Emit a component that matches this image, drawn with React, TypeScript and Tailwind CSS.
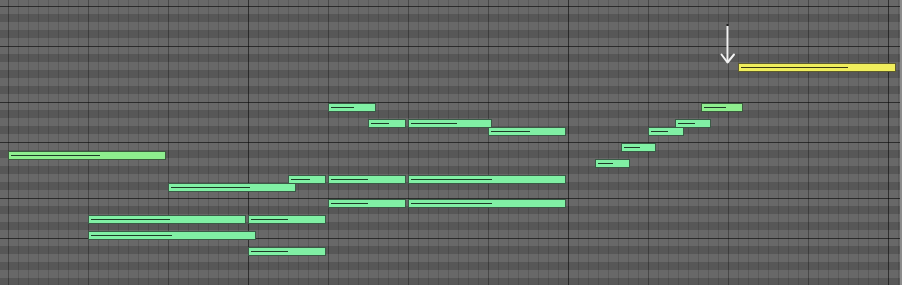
import React from "react";

// piano roll: rows are 8px, first row starts 2px above the page top
const ROWS = 36;
// top row is F, going down in pitch
const KEYS = ["F", "E", "D#", "D", "C#", "C", "B", "A#", "A", "G#", "G", "F#"];
const COLS = 91;

type Note = {
  x: number;
  end: number;
  y: number;
  lineEnd: number;
  tone?: "lime" | "yellow";
};

const notes: Note[] = [
  { x: 8, end: 166, y: 152, lineEnd: 100, tone: "lime" },
  { x: 168, end: 296, y: 184, lineEnd: 250 },
  { x: 88, end: 246, y: 216, lineEnd: 170 },
  { x: 248, end: 326, y: 216, lineEnd: 288 },
  { x: 88, end: 256, y: 232, lineEnd: 172 },
  { x: 248, end: 326, y: 248, lineEnd: 288 },
  { x: 288, end: 326, y: 176, lineEnd: 310 },
  { x: 328, end: 406, y: 176, lineEnd: 368 },
  { x: 408, end: 566, y: 176, lineEnd: 492 },
  { x: 328, end: 406, y: 200, lineEnd: 368 },
  { x: 408, end: 566, y: 200, lineEnd: 492 },
  { x: 328, end: 376, y: 104, lineEnd: 354 },
  { x: 368, end: 406, y: 120, lineEnd: 389 },
  { x: 408, end: 492, y: 120, lineEnd: 457 },
  { x: 488, end: 566, y: 128, lineEnd: 530 },
  { x: 595, end: 630, y: 160, lineEnd: 613 },
  { x: 621, end: 656, y: 144, lineEnd: 640 },
  { x: 648, end: 684, y: 128, lineEnd: 668 },
  { x: 675, end: 711, y: 120, lineEnd: 695 },
  { x: 701, end: 743, y: 104, lineEnd: 726, tone: "lime" },
  { x: 738, end: 896, y: 64, lineEnd: 848, tone: "yellow" },
];

function KeyRow({ index }: { index: number }) {
  const key = KEYS[index % 12];
  const black = key.includes("#");
  // dark line on the B/C and E/F boundaries
  const split = key === "B" || key === "E";
  return (
    <div
      className={
        (black ? "bg-[#575757]" : "bg-[#686868]") +
        " h-[8px] shrink-0" +
        (split && index > 0 ? " border-t border-[#2c2c2c]" : "")
      }
    />
  );
}

function GridCol({ index }: { index: number }) {
  const k = index - 1;
  let cls = "border-l border-[rgba(0,0,0,0.12)]";
  if (k >= 0 && k % 32 === 24) cls = "border-l border-[rgba(0,0,0,0.55)]";
  else if (k >= 0 && k % 8 === 0) cls = "border-l border-[rgba(0,0,0,0.3)]";
  return <div className={"h-full w-[10px] shrink-0 " + cls} />;
}

function NoteBox({ note }: { note: Note }) {
  const fill =
    note.tone === "yellow"
      ? "bg-[#f0ee5c] border-[#5e5c2c]"
      : note.tone === "lime"
        ? "bg-[#8eee8e] border-[#3c5a3e]"
        : "bg-[#80f0a4] border-[#3a5a46]";
  const line = note.tone === "yellow" ? "bg-[#3a3816]" : "bg-[#1f3a28]";
  return (
    <div
      className={"absolute flex h-[9px] items-center border pl-[2px] " + fill}
      style={{ left: note.x, top: note.y - 1, width: note.end - note.x }}
    >
      <div className={"h-px " + line} style={{ width: note.lineEnd - note.x - 3 }} />
    </div>
  );
}

export default function App() {
  return (
    <div className="flex h-[285px] w-[902px] overflow-hidden bg-[#686868]">
      <div className="relative h-full w-[900px] shrink-0 overflow-hidden">
        <div className="-mt-[2px] flex flex-col">
          {Array.from({ length: ROWS }, (_, i) => (
            <KeyRow key={i} index={i} />
          ))}
        </div>
        <div className="absolute inset-0 -ml-[2px] flex">
          {Array.from({ length: COLS }, (_, i) => (
            <GridCol key={i} index={i} />
          ))}
        </div>
        {notes.map((n, i) => (
          <NoteBox key={i} note={n} />
        ))}
        <svg className="absolute left-[719px] top-[24px]" width="18" height="42" viewBox="0 0 18 42">
          <path d="M8.5 2 V38.5" stroke="#f2f2f2" strokeWidth="2" fill="none" />
          <path
            d="M2.5 30.5 L8.5 38.5 L15 30.5"
            stroke="#f2f2f2"
            strokeWidth="2"
            fill="none"
            strokeLinecap="round"
            strokeLinejoin="round"
          />
          <rect x="7.5" y="0" width="2" height="2" fill="#202020" />
        </svg>
      </div>
      <div className="h-full w-[2px] shrink-0 bg-[#8c8c8c]" />
    </div>
  );
}
